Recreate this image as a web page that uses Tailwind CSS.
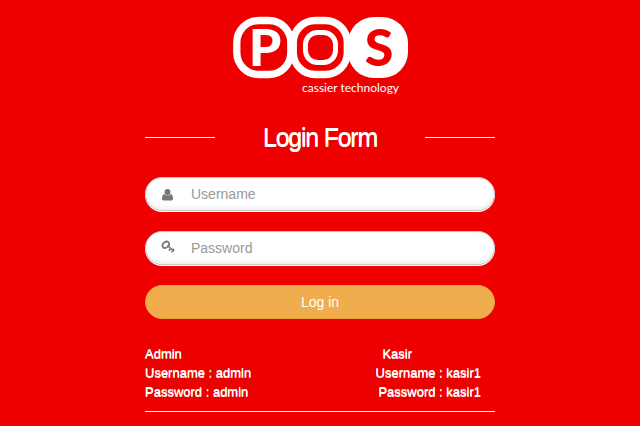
<!DOCTYPE html>
<html lang="en">
<head>
<meta charset="utf-8">
<meta name="viewport" content="width=device-width, initial-scale=1">
<title>Login Form</title>
<script src="https://cdn.jsdelivr.net/npm/@tailwindcss/browser@4"></script>
</head>
<body class="min-h-screen bg-[#ef0000] px-4 font-['Liberation_Sans',Arial,sans-serif] text-[13px] leading-[19px] text-white">
<main class="mx-auto w-full max-w-[350px] pt-4">
  <svg class="mx-auto block overflow-visible" width="176" height="84" viewBox="0 0 176 84" role="img" aria-label="POS cassier technology">
    <g fill="none" stroke="#fff">
      <rect x="4.800" y="4.500" width="54" height="54" rx="22" stroke-width="7.300"/>
      <rect x="61.300" y="4.500" width="54" height="54" rx="22" stroke-width="7.300"/>
      <rect x="73.500" y="16.500" width="30" height="30" rx="12" stroke-width="5"/>
    </g>
    <rect x="116" y="1" width="60" height="61" rx="26" fill="#fff"/>
    <g font-family="Lato, sans-serif" font-weight="900" font-size="52" text-anchor="middle">
      <text x="33" y="50" fill="#fff">P</text>
      <text x="147" y="50" fill="#ef0000">S</text>
    </g>
    <text x="70" y="76" fill="#fff" font-family="Lato, sans-serif" font-size="12">cassier technology</text>
  </svg>
  <form>
    <div class="mt-[21px] flex items-center justify-between">
      <span class="h-px w-1/5 bg-white"></span>
      <h1 class="text-[25px] leading-[32px] tracking-tighter [text-shadow:0_1px_0_#fff]">Login Form</h1>
      <span class="h-px w-1/5 bg-white"></span>
    </div>
    <div class="relative mt-6">
      <label for="username" class="absolute left-4 top-3">
        <svg width="13" height="12" viewBox="0 0 13 12" fill="#777" role="img" aria-label="Username"><path d="M6.500 0C8.400 0 9.500 1.300 9.500 3.100S8.300 6.400 6.500 6.400 3.500 4.900 3.500 3.100 4.600 0 6.500 0ZM3.400 5C4.200 6.200 5.200 6.700 6.500 6.700s2.300-.5 3.100-1.700c1.600.3 2.400 2 2.400 4.400 0 1.300-.9 2.200-2.100 2.200H3.100c-1.200 0-2.100-.9-2.100-2.200 0-2.400.8-4.100 2.400-4.400Z"/></svg>
      </label>
      <input id="username" type="text" placeholder="Username" class="block h-[34px] w-full rounded-full border border-[#c8c8c8] bg-white pr-5 pl-[45px] text-sm text-[#777] shadow-[0_1px_0_#fff,inset_0_-2px_5px_rgba(0,0,0,0.08)] outline-none placeholder:text-[#999]">
    </div>
    <div class="relative mt-5">
      <label for="password" class="absolute left-4 top-2">
        <svg width="15" height="15" viewBox="0 0 15 15" fill="none" stroke="#777" role="img" aria-label="Password"><ellipse cx="4.800" cy="5.800" rx="3.600" ry="2.700" transform="rotate(-40 4.800 5.800)" stroke-width="1.700"/><path d="M6.800 7 12.800 11.800M9.600 9.400 8.200 11.200M12.600 10.200 10.800 12.800" stroke-width="1.500" stroke-linecap="round"/></svg>
      </label>
      <input id="password" type="password" placeholder="Password" class="block h-[34px] w-full rounded-full border border-[#c8c8c8] bg-white pr-5 pl-[45px] text-sm text-[#777] shadow-[0_1px_0_#fff,inset_0_-2px_5px_rgba(0,0,0,0.08)] outline-none placeholder:text-[#999]">
    </div>
    <button type="submit" class="mt-5 block h-[34px] w-full rounded-full border border-[#eea236] bg-[#f0ad4e] text-sm text-white">Log in</button>
    <div class="mt-[25px] flex justify-between border-b border-white pb-[10px] [text-shadow:0_1px_0_#fff]">
      <div>
        <p>Admin</p>
        <p>Username : admin</p>
        <p>Password : admin</p>
      </div>
      <div class="pr-[14px] text-right">
        <p class="pr-[69px]">Kasir</p>
        <p>Username : kasir1</p>
        <p>Password : kasir1</p>
      </div>
    </div>
  </form>
</main>
</body>
</html>
